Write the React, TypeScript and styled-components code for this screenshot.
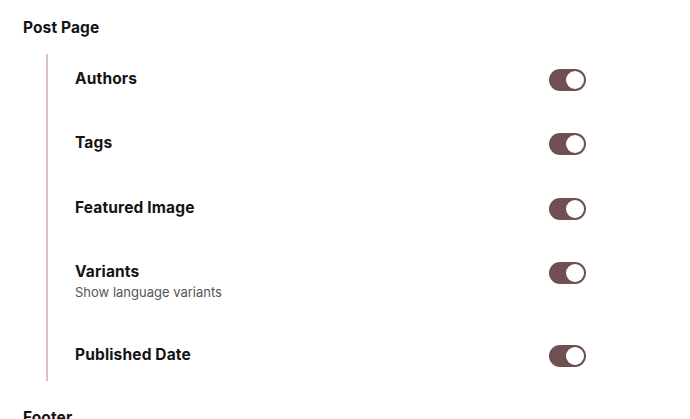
import React from "react";
import styled, { createGlobalStyle } from "styled-components";

const Global = createGlobalStyle`
  html, body { margin: 0; padding: 0; background: #fff; }
  body { font-family: Inter, "Noto Sans", sans-serif; color: #141414; }
`;

const Page = styled.div`
  padding: 18px 0 0 23px;
  width: 563px;
`;

const SectionTitle = styled.div`
  font-size: 15.5px;
  line-height: 20px;
  font-weight: 700;
  letter-spacing: 0.1px;
`;

const List = styled.div`
  margin: 16px 0 0 23px;
  border-left: 2px solid #dcc0c3;
  padding: 15px 0 16px 27px;
  display: flex;
  flex-direction: column;
  gap: 44.4px;
`;

const Row = styled.div`
  display: flex;
  justify-content: space-between;
  align-items: flex-start;
`;

const Texts = styled.div`
  display: flex;
  flex-direction: column;
  gap: 2px;
`;

const Title = styled.div`
  font-size: 15.5px;
  line-height: 20px;
  font-weight: 700;
  letter-spacing: 0.15px;
`;

const Sub = styled.div`
  font-size: 13px;
  line-height: 16px;
  color: #555;
`;

const Toggle = styled.div<{ $on: boolean }>`
  width: 37px;
  height: 22px;
  border-radius: 11px;
  background: ${(p) => (p.$on ? "#6f4f52" : "#ccc")};
  display: flex;
  align-items: center;
  justify-content: ${(p) => (p.$on ? "flex-end" : "flex-start")};
  padding: 0 2px;
  box-sizing: border-box;
  margin-bottom: -2px;
`;

const Knob = styled.div`
  width: 18px;
  height: 18px;
  border-radius: 50%;
  background: #fff;
`;

const Next = styled.div`
  margin-top: 27px;
`;

const items = [
  { title: "Authors" },
  { title: "Tags" },
  { title: "Featured Image" },
  { title: "Variants", sub: "Show language variants" },
  { title: "Published Date" },
];

export default function App() {
  return (
    <>
      <Global />
      <Page>
        <SectionTitle>Post Page</SectionTitle>
        <List>
          {items.map((it) => (
            <Row key={it.title}>
              <Texts>
                <Title>{it.title}</Title>
                {it.sub && <Sub>{it.sub}</Sub>}
              </Texts>
              <Toggle $on>
                <Knob />
              </Toggle>
            </Row>
          ))}
        </List>
        <Next>
          <SectionTitle>Footer</SectionTitle>
        </Next>
      </Page>
    </>
  );
}
